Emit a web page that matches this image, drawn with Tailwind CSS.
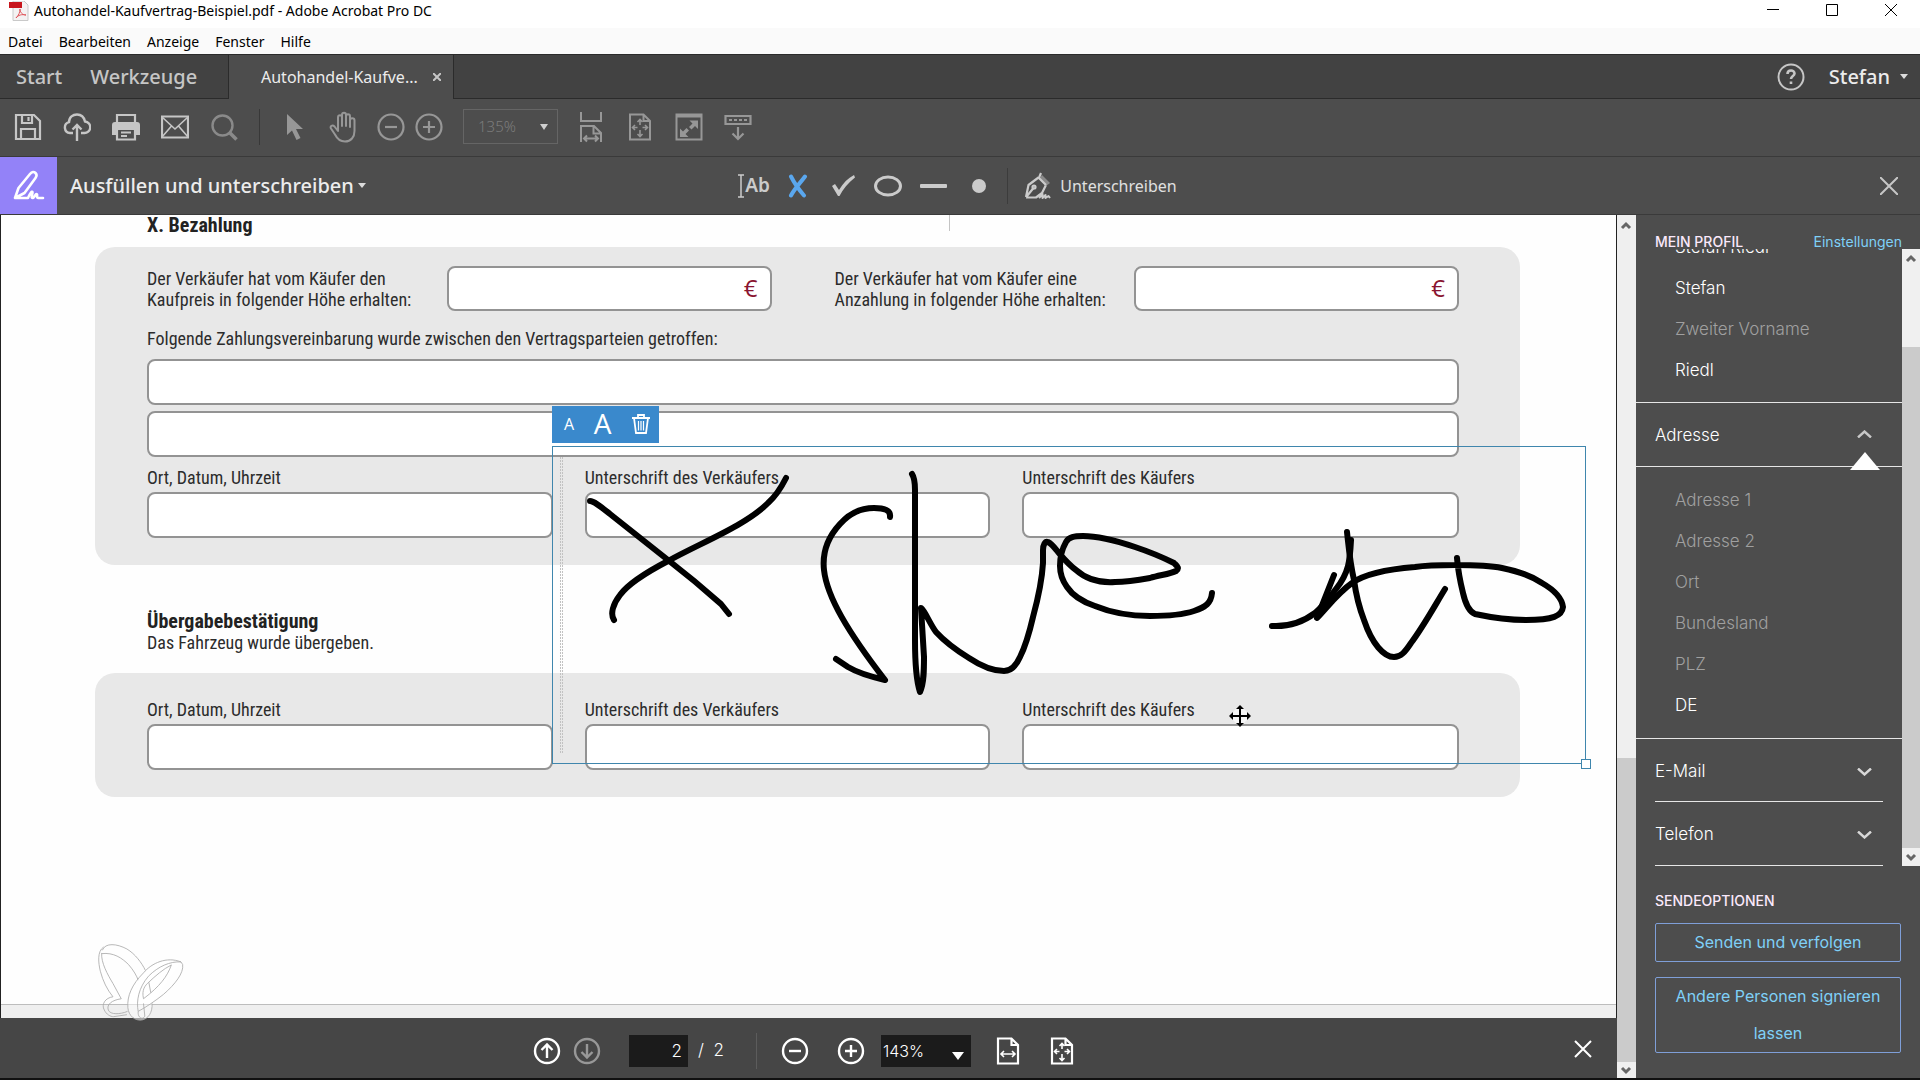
<!DOCTYPE html>
<html lang="de">
  <head>
    <meta charset="UTF-8" />
    <meta name="viewport" content="width=device-width, initial-scale=1.0" />
    <title>Autohandel-Kaufvertrag-Beispiel.pdf - Adobe Acrobat Pro DC</title>
    <script src="https://cdn.jsdelivr.net/npm/@tailwindcss/browser@4"></script>
  </head>
  <body class="flex h-screen flex-col overflow-hidden bg-[#4d4d4d] font-['Noto_Sans','Open_Sans',sans-serif] text-[#ececec]">
    <!-- Title bar -->
    <header class="flex h-7 shrink-0 items-start justify-between bg-white text-black">
      <div class="flex items-center gap-1 pl-2">
        <svg class="h-5 w-[22px]" viewBox="0 0 22 20">
          <path d="M5 0h11l4 4v15.500H5z" fill="#f4f2f2" stroke="#c9c9c9" />
          <path d="M1 1h13v6H1z" fill="#c8161d" />
          <path d="M8 17c3-3 4-6 4-9M8 17c2-3 6-4 10-3M12 8c0 3 2 6 6 6" fill="none" stroke="#e0555a" />
        </svg>
        <h1 class="text-[14px] leading-[22px]">Autohandel-Kaufvertrag-Beispiel.pdf - Adobe Acrobat Pro DC</h1>
      </div>
      <div class="flex h-5 text-black">
        <button aria-label="Minimieren" class="flex w-[59px] items-center justify-center">
          <svg class="h-3 w-3" viewBox="0 0 12 12" stroke="currentColor"><path d="M0 5.500h12" /></svg>
        </button>
        <button aria-label="Maximieren" class="flex w-[59px] items-center justify-center">
          <svg class="h-3 w-3" viewBox="0 0 12 12" fill="none" stroke="currentColor"><path d="M.5.5h11v11H.5z" /></svg>
        </button>
        <button aria-label="Schließen" class="flex w-[59px] items-center justify-center">
          <svg class="h-3 w-3" viewBox="0 0 12 12" stroke="currentColor"><path d="M0 0l12 12M12 0L0 12" /></svg>
        </button>
      </div>
    </header>

    <!-- Menu -->
    <nav class="flex h-[26px] shrink-0 items-center gap-4 bg-[#fafafa] pl-2 text-[14px] text-black">
      <a href="#">Datei</a>
      <a href="#">Bearbeiten</a>
      <a href="#">Anzeige</a>
      <a href="#">Fenster</a>
      <a href="#">Hilfe</a>
    </nav>

    <!-- Tabs -->
    <div class="flex h-[45px] shrink-0 border-t border-[#2b2b2b] bg-[#424242]">
      <div class="flex w-[229px] items-center gap-7 border-r border-b border-[#2b2b2b] pl-4 text-xl font-medium text-[#c6c6c6]">
        <a href="#">Start</a>
        <a href="#">Werkzeuge</a>
      </div>
      <div class="flex w-[224px] items-center justify-between bg-[#4d4d4d] pr-3 pl-8 text-base">
        <span>Autohandel-Kaufve...</span>
        <button aria-label="Tab schließen" class="flex">
          <svg class="h-2 w-2" viewBox="0 0 8 8" stroke="#c6c6c6" stroke-width="2"><path d="M0 0l8 8M8 0L0 8" /></svg>
        </button>
      </div>
      <div class="flex grow items-center justify-end gap-6 border-b border-l border-[#2b2b2b] pr-3">
        <button aria-label="Hilfe">
          <svg class="h-7 w-7" viewBox="0 0 28 28" fill="none" stroke="#c6c6c6" stroke-width="2">
            <circle cx="14" cy="14" r="12.500" />
            <path d="M10.500 11c0-4.500 7-4.500 7-.5 0 2.500-3.500 2.500-3.500 5.500M14 18.500v2.500" stroke-width="2.600" />
          </svg>
        </button>
        <button class="flex items-center gap-[10px] text-xl font-medium">
          Stefan
          <svg class="h-[5px] w-2" viewBox="0 0 8 5" fill="#dcdcdc"><path d="M0 0h8L4 5z" /></svg>
        </button>
      </div>
    </div>

    <!-- Toolbar -->
    <div class="flex h-[58px] shrink-0 items-center border-b border-[#3a3a3a] pb-[2px] pl-1 text-[#c6c6c6]">
      <button aria-label="Speichern" class="flex w-12 justify-center">
        <svg class="h-7 w-7" viewBox="0 0 28 28" fill="none" stroke="currentColor" stroke-width="2.200">
          <path d="M2 2h18l6 6v18H2zM7 26V16h14v10M8 2v8h10V2M14.500 4v4" />
        </svg>
      </button>
      <button aria-label="In die Cloud" class="flex w-[50px] justify-center">
        <svg class="h-7 w-7" viewBox="0 0 28 28" fill="none" stroke="currentColor" stroke-width="2.400">
          <path d="M10 20H7a5.500 5.500 0 0 1-1-10.800C6 4 10 1.500 14 1.500S21 4 22 8.500A5.700 5.700 0 0 1 21 20h-3M14 28V12M9.500 16.500L14 12l4.500 4.500" />
        </svg>
      </button>
      <button aria-label="Drucken" class="flex w-12 justify-center">
        <svg class="h-7 w-7" viewBox="0 0 28 28" fill="none" stroke="currentColor" stroke-width="2.200">
          <path d="M5 9V2h18v7" />
          <path d="M0 12a3 3 0 0 1 3-3h22a3 3 0 0 1 3 3v10h-5v-6H5v6H0z" fill="currentColor" stroke="none" />
          <path d="M5 16h18v10.500H5zM9 19.500h10M9 23h6" />
        </svg>
      </button>
      <button aria-label="E-Mail senden" class="flex w-[50px] justify-center">
        <svg class="h-7 w-7" viewBox="0 0 28 28" fill="none" stroke="currentColor" stroke-width="2.200">
          <path d="M1 3.500h26v21H1z" />
          <path d="M1 4l13 12L27 4M1 24l9.500-11M27 24l-9.500-11" stroke-width="1.600" />
        </svg>
      </button>
      <button aria-label="Suchen" class="flex w-12 justify-center text-[#8a8a8a]">
        <svg class="h-7 w-7" viewBox="0 0 28 28" fill="none" stroke="currentColor" stroke-width="2.400">
          <circle cx="12.500" cy="12.500" r="10" />
          <path d="M19.500 19.500l7 7" stroke-width="3.500" />
        </svg>
      </button>
      <div class="mx-[11px] h-9 w-px bg-[#383838]"></div>
      <button aria-label="Auswahl" class="flex w-12 justify-center text-[#979797]">
        <svg class="h-7 w-7" viewBox="0 0 28 28" fill="currentColor">
          <path d="M6 1l16 15h-7l4.500 9-4 2-4.500-9.500L6 22z" />
        </svg>
      </button>
      <button aria-label="Hand" class="flex w-12 justify-center text-[#979797]">
        <svg class="h-8 w-7" viewBox="0 0 28 32" fill="none" stroke="currentColor" stroke-width="2" stroke-linejoin="round" stroke-linecap="round">
          <path d="M9 17V6.500c0-3 4-3 4 0V15M13 15V4c0-3 4-3 4 0v11M17 15V5.500c0-3 4-3 4 0V16M21 16V9.500c0-3 4.500-3 4.500 0V20c0 6-3.500 10.500-9.500 10.500-5 0-8-3-10-7L2 17.500c-1.500-2.500 1.500-4 3.500-2L9 20v-3" />
        </svg>
      </button>
      <button aria-label="Verkleinern" class="flex w-12 justify-center text-[#979797]">
        <svg class="h-7 w-7" viewBox="0 0 28 28" fill="none" stroke="currentColor" stroke-width="2.200">
          <circle cx="14" cy="14" r="12.500" /><path d="M8 14h12" />
        </svg>
      </button>
      <button aria-label="Vergrößern" class="flex w-7 justify-center text-[#979797]">
        <svg class="h-7 w-7" viewBox="0 0 28 28" fill="none" stroke="currentColor" stroke-width="2.200">
          <circle cx="14" cy="14" r="12.500" /><path d="M8 14h12M14 8v12" />
        </svg>
      </button>
      <div class="relative ml-5">
        <select aria-label="Zoomfaktor" class="h-[35px] w-[95px] appearance-none border border-[#656565] pl-[14px] text-[15px] font-light text-[#7c7c7c]">
          <option>135%</option>
        </select>
        <svg class="pointer-events-none absolute top-[15px] right-[10px] h-[6px] w-2" viewBox="0 0 8 6" fill="#cfcfcf"><path d="M0 0h8L4 6z" /></svg>
      </div>
      <button aria-label="Seitenbreite" class="ml-2 flex w-[49px] justify-center text-[#979797]">
        <svg class="h-8 w-6" viewBox="0 0 24 32" fill="none" stroke="currentColor" stroke-width="2">
          <path d="M2 1v9h20V1M2 31V15h13l7 7v9M14.500 15v7.500H22M5 27.500h14M8 24.500l-3 3 3 3M16 24.500l3 3-3 3" />
        </svg>
      </button>
      <button aria-label="Ganze Seite" class="flex w-[49px] justify-center text-[#979797]">
        <svg class="h-7 w-6" viewBox="0 0 24 28" fill="none" stroke="currentColor" stroke-width="2">
          <path d="M2 1.500h13.500L22 8v18.500H2zM15.500 1.500V8H22" />
          <path d="M12 7v5M12 17v6M4.500 14.500h5M14.500 14.500h5M9.500 9L12 6.500 14.500 9M9.500 21l2.500 2.500 2.500-2.500M7 12l-2.500 2.500L7 17M17 12l2.500 2.500L17 17" stroke-width="1.600" />
        </svg>
      </button>
      <button aria-label="Vollbild" class="flex w-[49px] justify-center text-[#979797]">
        <svg class="h-7 w-7" viewBox="0 0 28 28" fill="none" stroke="currentColor" stroke-width="2">
          <path d="M1.500 1.500h25v25h-25zM1.500 3.500h25" />
          <path d="M14.500 7.500H23V16l-3-3-3.500 3.500-2.500-2.500 3.500-3.500zM13.500 24H5v-8.500l3 3 3.500-3.500 2.500 2.500-3.500 3.500z" fill="currentColor" stroke="none" />
        </svg>
      </button>
      <button aria-label="Werkzeugleiste" class="flex w-[49px] justify-center text-[#979797]">
        <svg class="h-7 w-7" viewBox="0 0 28 28" fill="none" stroke="currentColor" stroke-width="2.200">
          <path d="M1.500 3h25v8h-25zM14 14v12M8.500 20.500L14 26l5.500-5.500" />
          <path d="M5 7h18" stroke-dasharray="3 2" />
        </svg>
      </button>
    </div>

    <!-- Fill and sign bar -->
    <div class="grid h-[58px] shrink-0 grid-cols-[1fr_auto_1fr] items-center border-b border-[#3a3a3a]">
      <div class="flex h-full items-center">
        <div class="flex h-full w-[57px] items-center justify-center bg-[#9382f8]">
          <svg class="h-8 w-8" viewBox="0 0 32 32" fill="none" stroke="#fff" stroke-width="2.600" stroke-linejoin="round" stroke-linecap="round">
            <path d="M2 28l3.500-10L17 4c2-2.500 4-2.500 5.500-1s1.500 3 0 5L11.500 23 2 28h13c2-5 4-7 4.500-6s-2 6 0 6 2.500-4 4-4-.5 4 1.500 4h5" />
          </svg>
        </div>
        <button class="ml-[13px] flex items-center gap-1 text-xl font-medium">
          Ausfüllen und unterschreiben
          <svg class="h-[5px] w-2" viewBox="0 0 8 5" fill="#dcdcdc"><path d="M0 0h8L4 5z" /></svg>
        </button>
      </div>
      <div class="flex items-center pr-[6px] text-[#cbcbcb]">
        <button class="flex w-[38px] items-center text-[19px] font-semibold">
          <svg class="h-6 w-2" viewBox="0 0 8 24" fill="none" stroke="currentColor" stroke-width="1.500"><path d="M1 1h6M4 1v22M1 23h6" /></svg>Ab
        </button>
        <button aria-label="Kreuz" class="flex w-[46px] justify-center">
          <svg class="h-6 w-6" viewBox="0 0 24 24" fill="none" stroke="#5aa7ee" stroke-width="4" stroke-linecap="round">
            <path d="M5 2.500c3 6 7 12 13 19M19 2.500C15 8 9 14 5 21.500" />
          </svg>
        </button>
        <button aria-label="Häkchen" class="flex w-11 justify-center">
          <svg class="h-6 w-6" viewBox="0 0 24 24" fill="currentColor">
            <path d="M1 12l3-2 4 6C12 9 17 4 23 1l1 2.500C17 9 12 15 8.500 22H7z" />
          </svg>
        </button>
        <button aria-label="Kreis" class="flex w-[46px] justify-center">
          <svg class="h-6 w-[30px]" viewBox="0 0 30 24" fill="none" stroke="currentColor" stroke-width="3"><ellipse cx="15" cy="12" rx="12.500" ry="9" /></svg>
        </button>
        <button aria-label="Linie" class="flex w-11 justify-center">
          <svg class="h-1 w-[27px]" viewBox="0 0 27 4" fill="currentColor"><rect width="27" height="4" rx="1" /></svg>
        </button>
        <button aria-label="Punkt" class="flex w-12 justify-center">
          <svg class="h-[14px] w-[14px]" viewBox="0 0 14 14" fill="currentColor"><circle cx="7" cy="7" r="7" /></svg>
        </button>
        <div class="mr-4 ml-1 h-9 w-px bg-[#3c3c3c]"></div>
        <button class="flex items-center gap-2 text-base text-[#e0e0e0]">
          <svg class="h-7 w-7" viewBox="0 0 28 28" fill="none" stroke="#cbcbcb" stroke-width="2.200" stroke-linejoin="round">
            <path d="M2 25L4.500 13l10-7.500M22 13l-4 8-6 4.500H2M14.500 7L17 1M3 24l6.500-8" />
            <path d="M18 3l8 8-4 3-7-7z" fill="#8a8a8a" stroke="none" />
            <path d="M14.500 5.500L22 13" />
            <circle cx="10" cy="15" r="1.500" />
            <path d="M15 26l3.500-4v4l3-3v3l3-2 1.500 2" stroke-width="2" />
          </svg>
          Unterschreiben
        </button>
      </div>
      <button aria-label="Leiste schließen" class="mr-[22px] justify-self-end">
        <svg class="h-[18px] w-[18px]" viewBox="0 0 18 18" stroke="#c6c6c6" stroke-width="2"><path d="M0 0l18 18M18 0L0 18" /></svg>
      </button>
    </div>

    <div class="flex min-h-0 grow">
      <div class="flex min-w-0 grow flex-col">
        <!-- Document -->
        <main class="relative grow border-r border-l border-[#222] bg-[#fefefe] pr-24 pl-[94px] font-['Roboto_Condensed','Roboto',sans-serif] text-lg leading-[21px] text-[#2c2c2c]">
          <h2 class="pl-[52px] text-xl leading-[21px] font-bold text-[#222]">X. Bezahlung</h2>
          <section class="mt-[11px] rounded-[20px] bg-[#e8e8e8] pt-[19px] pr-[61px] pb-[27px] pl-[52px]">
            <div class="grid grid-cols-2 gap-[63px]">
              <div class="flex items-center">
                <label for="price" class="grow">Der Verkäufer hat vom Käufer den<br />Kaufpreis in folgender Höhe erhalten:</label>
                <div class="relative w-[52%]">
                  <input id="price" class="block h-[45px] w-full rounded-lg border-2 border-[#939393] bg-white" />
                  <span class="absolute top-3 right-[14px] font-['Open_Sans',sans-serif] text-2xl leading-5 text-[#8a1530]">€</span>
                </div>
              </div>
              <div class="flex items-center">
                <label for="deposit" class="grow">Der Verkäufer hat vom Käufer eine<br />Anzahlung in folgender Höhe erhalten:</label>
                <div class="relative w-[52%]">
                  <input id="deposit" class="block h-[45px] w-full rounded-lg border-2 border-[#939393] bg-white" />
                  <span class="absolute top-3 right-[14px] font-['Open_Sans',sans-serif] text-2xl leading-5 text-[#8a1530]">€</span>
                </div>
              </div>
            </div>
            <label for="terms1" class="mt-[17px] block">Folgende Zahlungsvereinbarung wurde zwischen den Vertragsparteien getroffen:</label>
            <input id="terms1" class="mt-[10px] block h-[46px] w-full rounded-lg border-2 border-[#939393] bg-white" />
            <input id="terms2" aria-label="Zahlungsvereinbarung, Zeile 2" class="mt-[6px] block h-[46px] w-full rounded-lg border-2 border-[#939393] bg-white" />
            <div class="mt-[10px] grid grid-cols-[405fr_405fr_436fr] gap-8">
              <label>Ort, Datum, Uhrzeit<input class="mt-1 block h-[46px] w-full rounded-lg border-2 border-[#939393] bg-white" /></label>
              <label>Unterschrift des Verkäufers<input class="mt-1 block h-[46px] w-full rounded-lg border-2 border-[#939393] bg-white" /></label>
              <label>Unterschrift des Käufers<input class="mt-1 block h-[46px] w-full rounded-lg border-2 border-[#939393] bg-white" /></label>
            </div>
          </section>
          <h2 class="mt-[46px] pl-[52px] text-xl leading-[21px] font-bold text-[#222]">Übergabebestätigung</h2>
          <p class="pl-[52px]">Das Fahrzeug wurde übergeben.</p>
          <section class="mt-5 rounded-[20px] bg-[#e8e8e8] pt-[26px] pr-[61px] pb-[27px] pl-[52px]">
            <div class="grid grid-cols-[405fr_405fr_436fr] gap-8">
              <label>Ort, Datum, Uhrzeit<input class="mt-1 block h-[46px] w-full rounded-lg border-2 border-[#939393] bg-white" /></label>
              <label>Unterschrift des Verkäufers<input class="mt-1 block h-[46px] w-full rounded-lg border-2 border-[#939393] bg-white" /></label>
              <label>Unterschrift des Käufers<input class="mt-1 block h-[46px] w-full rounded-lg border-2 border-[#939393] bg-white" /></label>
            </div>
          </section>

          <div class="absolute bottom-0 left-0 h-[14px] w-full border-t border-[#bdbdbd] bg-[#efefef]"></div>
          <div class="absolute top-0 left-[948px] h-4 w-px bg-[#c4c4c4]"></div>
          <svg class="absolute top-[242px] left-[559px] h-[296px] w-[3px]" viewBox="0 0 3 296" stroke="#c2c2c2" stroke-dasharray="2 1"><path d="M.5 0v296M2.500 0v296" /></svg>

          <!-- Butterfly watermark -->
          <svg class="absolute -bottom-[3px] left-24 z-10 h-[78px] w-[88px]" viewBox="50 1090 265 235" fill="none" stroke="#a9a9a9" stroke-width="2.500">
            <path d="M66 1112C75 1088 110 1092 140 1108C165 1123 185 1150 196 1173M64 1122C100 1118 125 1135 145 1155C160 1172 170 1190 174 1202" />
            <path d="M70 1102C50 1115 54 1150 60 1175C68 1205 80 1230 98 1252C75 1255 62 1275 72 1292C78 1305 90 1312 100 1312L140 1306M64 1120C62 1150 82 1185 98 1212L123 1258C95 1262 78 1275 84 1292C90 1307 120 1305 142 1296" />
            <path d="M303 1147C260 1130 215 1150 190 1180C155 1215 140 1250 143 1285C145 1310 165 1325 185 1322C205 1318 217 1300 216 1272" fill="#fff" fill-opacity=".5" />
            <path d="M303 1147C270 1145 235 1160 205 1190C175 1225 168 1265 174 1296C195 1285 225 1265 250 1245C285 1215 312 1180 308 1155zM274 1156C262 1190 240 1220 190 1258C184 1230 195 1218 206 1208C225 1190 250 1168 274 1156M206 1208L212 1240M174 1296C172 1318 190 1322 194 1310L190 1272" />
          </svg>

          <!-- Placed signature -->
          <div class="absolute top-[231px] left-[551px] h-[318px] w-[1034px] border border-[#3f86ad]">
            <svg class="absolute -top-px -left-px h-[318px] w-[1034px] overflow-visible" viewBox="552 446 1034 318" fill="none" stroke="#000" stroke-width="6" stroke-linecap="round" stroke-linejoin="round">
              <path d="M590 501C594 501 600 506 610 514L668 560C690 577 712 596 721 604L729 614" />
              <path d="M786 478C781 488 777 495 768 503C745 526 700 543 668 561C645 573 628 584 620 595C613 604 610 614 614 620" />
              <path d="M890 517C891 510 884 508 874 508C860 508 848 515 840 524C828 537 822 552 824 570C827 597 848 632 885 680C872 677 858 673 848 667L836 659" />
              <path d="M912 474C914 477 915 482 915 490L915 640C915 665 917 683 920 692C924 683 924 670 924 657L921 608C925 611 930 624 936 632C946 643 956 650 969 658C981 666 993 671 1004 671C1011 671 1016 666 1020 657C1026 645 1030 630 1033 617C1039 595 1042 580 1043 563L1043 550C1043 545 1045 541 1048 542C1052 544 1054 547 1058 552C1064 559 1069 565 1076 570C1086 579 1100 583 1115 582C1128 582 1139 580 1150 578C1160 575 1170 574 1176 571C1180 568 1177 566 1174 563C1164 558 1150 552 1135 547C1117 541 1100 536 1083 536C1074 536 1069 537 1066 542C1062 549 1060 556 1060 566C1060 574 1062 580 1067 587C1073 596 1083 602 1095 606C1112 613 1131 616 1150 616C1167 616 1182 615 1194 611C1206 607 1211 603 1212 593" />
              <path d="M1272 626C1290 627 1303 622 1315 613C1323 606 1329 598 1336 589C1349 573 1350 560 1351 540" />
              <path d="M1334 575L1317 618C1330 604 1339 592 1352 583C1366 573 1390 569 1415 567C1428 565 1440 565 1455 565C1472 565 1488 565 1502 568C1517 571 1530 575 1542 583C1556 591 1562 599 1563 607C1562 616 1553 620 1526 620C1508 620 1489 617 1475 614C1468 611 1465 602 1463 593C1460 581 1458 570 1457 558" />
              <path d="M1347 532C1349 550 1350 563 1354 580C1356 595 1359 607 1364 620C1372 644 1384 657 1394 657C1401 657 1405 652 1411 643C1423 627 1434 607 1445 589" />
            </svg>
            <div class="absolute -right-[6px] -bottom-[6px] h-[10px] w-[10px] border border-[#3f86ad] bg-white"></div>
            <div class="absolute bottom-full -left-px mb-1 flex h-[37px] w-[107px] items-center justify-between bg-[#3a89cc] pr-2 pb-[2px] pl-3 font-['Open_Sans',sans-serif] text-white">
              <button class="text-base" aria-label="Kleiner">A</button>
              <button class="text-[28px]" aria-label="Größer">A</button>
              <button aria-label="Löschen">
                <svg class="h-5 w-5" viewBox="0 0 20 20" fill="none" stroke="#fff" stroke-width="1.800">
                  <path d="M1 4h18M7 3.500V1h6v2.500M3 4l2 15h10l2-15" />
                  <path d="M7.500 7v9.500M10 7v9.500M12.500 7v9.500" stroke-width="1.200" />
                </svg>
              </button>
            </div>
            <!-- Move cursor -->
            <svg class="absolute top-[258px] left-[676px] h-[22px] w-[22px]" viewBox="0 0 22 22" fill="none" stroke="#000" stroke-width="2">
              <path d="M11 0l11 11-11 11L0 11z" fill="#fff" fill-opacity=".6" stroke="none" />
              <path d="M11 2v18M2 11h18" />
              <path d="M11 0l4 4H7zM11 22l4-4H7zM0 11l4-4v8zM22 11l-4-4v8z" fill="#000" stroke="none" />
            </svg>
          </div>
        </main>

        <!-- Page bar -->
        <footer class="grid h-[60px] shrink-0 grid-cols-[1fr_auto_1fr] items-center bg-[#464646] pr-6 font-['Inter',sans-serif] font-light text-white">
          <div></div>
          <div class="flex items-center pt-[6px] pl-[14px]">
            <button aria-label="Vorherige Seite">
              <svg class="h-7 w-7" viewBox="0 0 28 28" fill="none" stroke="#fff" stroke-width="2.400"><circle cx="14" cy="14" r="12" /><path d="M14 21V8M8.500 13L14 7.500l5.500 5.500" /></svg>
            </button>
            <button aria-label="Nächste Seite" class="ml-3">
              <svg class="h-7 w-7" viewBox="0 0 28 28" fill="none" stroke="#989898" stroke-width="2.400"><circle cx="14" cy="14" r="12" /><path d="M14 7v13M8.500 15l5.500 5.500 5.500-5.500" /></svg>
            </button>
            <input aria-label="Seite" value="2" class="ml-7 h-8 w-[59px] bg-[#1b1b1b] pr-[6px] text-right text-[17px]" />
            <span class="ml-[10px] w-[34px] text-[17px] whitespace-pre">/  2</span>
            <div class="ml-6 h-9 w-px bg-[#5c5c5c]"></div>
            <button aria-label="Verkleinern" class="ml-6">
              <svg class="h-7 w-7" viewBox="0 0 28 28" fill="none" stroke="#fff" stroke-width="2.400"><circle cx="14" cy="14" r="12" /><path d="M8 14h12" /></svg>
            </button>
            <button aria-label="Vergrößern" class="ml-7">
              <svg class="h-7 w-7" viewBox="0 0 28 28" fill="none" stroke="#fff" stroke-width="2.400"><circle cx="14" cy="14" r="12" /><path d="M8 14h12M14 8v12" /></svg>
            </button>
            <div class="relative ml-4">
              <select aria-label="Zoom" class="h-8 w-[90px] appearance-none bg-[#1b1b1b] pl-[2px] text-base">
                <option>143%</option>
              </select>
              <svg class="pointer-events-none absolute top-[17px] right-[7px] h-2 w-3" viewBox="0 0 12 8" fill="#fff"><path d="M0 0h12L6 8z" /></svg>
            </div>
            <button aria-label="Seitenbreite" class="ml-[25px]">
              <svg class="h-7 w-6" viewBox="0 0 24 28" fill="none" stroke="#fff" stroke-width="2.200">
                <path d="M2 1.500h13.500L22 8v18.500H2zM15.500 1.500V8H22" />
                <path d="M5 17h14M8 14l-3 3 3 3M16 14l3 3-3 3" stroke-width="1.600" />
              </svg>
            </button>
            <button aria-label="Ganze Seite" class="ml-[30px]">
              <svg class="h-7 w-6" viewBox="0 0 24 28" fill="none" stroke="#fff" stroke-width="2.200">
                <path d="M2 1.500h13.500L22 8v18.500H2zM15.500 1.500V8H22" />
                <path d="M12 7v5M12 17v6M4.500 14.500h5M14.500 14.500h5M9.500 9L12 6.500 14.500 9M9.500 21l2.500 2.500 2.500-2.500M7 12l-2.500 2.500L7 17M17 12l2.500 2.500L17 17" stroke-width="1.600" />
              </svg>
            </button>
          </div>
          <button aria-label="Schließen" class="justify-self-end pt-[2px]">
            <svg class="h-5 w-5" viewBox="0 0 20 20" stroke="#fff" stroke-width="2"><path d="M2 2l16 16M18 2L2 18" /></svg>
          </button>
        </footer>
      </div>

      <!-- Document scrollbar -->
      <div class="flex w-[19px] shrink-0 flex-col bg-[#efefef] text-[#666]">
        <svg class="mt-1 h-3 w-[18px]" viewBox="0 0 18 12" fill="none" stroke="currentColor" stroke-width="3"><path d="M5 9l4-4 4 4" /></svg>
        <div class="grow-[527]"></div>
        <div class="grow-[304] bg-[#cbcbcb]"></div>
        <svg class="h-4 w-[18px]" viewBox="0 0 18 16" fill="none" stroke="currentColor" stroke-width="3"><path d="M5 6l4 4 4-4" /></svg>
      </div>

      <!-- Profile panel -->
      <aside class="flex w-[284px] shrink-0 flex-col font-['Inter',sans-serif] text-[17px] font-light text-white">
        <div class="flex h-[34px] shrink-0 items-end justify-between pr-[18px] pl-[19px] text-[14px] leading-[14px] font-medium">
          <h2 class="text-[#fbe9fb]">MEIN PROFIL</h2>
          <a href="#" class="font-normal text-[#7fd0f7]">Einstellungen</a>
        </div>
        <div class="flex h-[617px] shrink-0">
          <div class="grow overflow-hidden">
            <ul class="-mt-[22px] pb-[11px] pl-[39px] leading-[41px]">
              <li>Stefan Riedl</li>
              <li>Stefan</li>
              <li class="text-[#a0a0a0]">Zweiter Vorname</li>
              <li>Riedl</li>
            </ul>
            <button class="relative flex h-[65px] w-full items-center justify-between border-y border-[#e6e6e6] pt-[2px] pr-[30px] pl-[19px]">
              Adresse
              <svg class="mb-1 h-2 w-[15px]" viewBox="0 0 15 8" fill="none" stroke="#c8c8c8" stroke-width="2.400"><path d="M1 7.500l6.500-6 6.500 6" /></svg>
              <svg class="absolute right-[22px] -bottom-1 h-[18px] w-[30px]" viewBox="0 0 30 18" fill="#fff"><path d="M15 0l15 18H0z" /></svg>
            </button>
            <ul class="border-b border-[#e6e6e6] pt-[13px] pb-3 pl-[39px] leading-[41px] text-[#a0a0a0]">
              <li>Adresse 1</li>
              <li>Adresse 2</li>
              <li>Ort</li>
              <li>Bundesland</li>
              <li>PLZ</li>
              <li class="text-white">DE</li>
            </ul>
            <div class="pr-[19px] pl-[19px]">
              <button class="flex h-[63px] w-full items-center justify-between border-b border-[#e6e6e6] pt-[3px] pr-[11px]">
                E-Mail
                <svg class="h-2 w-[15px]" viewBox="0 0 15 8" fill="none" stroke="#d8d8d8" stroke-width="2.400"><path d="M1 .5l6.500 6 6.500-6" /></svg>
              </button>
              <button class="flex h-16 w-full items-center justify-between border-b border-[#e6e6e6] pt-[3px] pr-[11px]">
                Telefon
                <svg class="h-2 w-[15px]" viewBox="0 0 15 8" fill="none" stroke="#d8d8d8" stroke-width="2.400"><path d="M1 .5l6.500 6 6.500-6" /></svg>
              </button>
            </div>
          </div>
          <div class="flex w-[18px] shrink-0 flex-col bg-[#f0f0f0] text-[#666]">
            <svg class="h-[18px] w-[18px]" viewBox="0 0 18 18" fill="none" stroke="currentColor" stroke-width="3"><path d="M5 12l4-4 4 4" /></svg>
            <div class="grow-[80]"></div>
            <div class="grow-[501] bg-[#cbcbcb]"></div>
            <svg class="h-[18px] w-[18px]" viewBox="0 0 18 18" fill="none" stroke="currentColor" stroke-width="3"><path d="M5 7l4 4 4-4" /></svg>
          </div>
        </div>
        <div class="flex flex-col pr-[19px] pl-[19px]">
          <h2 class="mt-7 text-[14px] leading-[14px] font-medium text-[#fbe9fb]">SENDEOPTIONEN</h2>
          <button class="mt-[15px] rounded-xs border border-[#7f9fd8] text-base leading-[37px] font-normal text-[#7fd0f7]">Senden und verfolgen</button>
          <button class="mt-[15px] rounded-xs border border-[#7f9fd8] px-2 text-base leading-[37px] font-normal text-[#7fd0f7]">Andere Personen signieren lassen</button>
        </div>
      </aside>
    </div>
    <div class="h-[2px] shrink-0 bg-[#111]"></div>
  </body>
</html>
